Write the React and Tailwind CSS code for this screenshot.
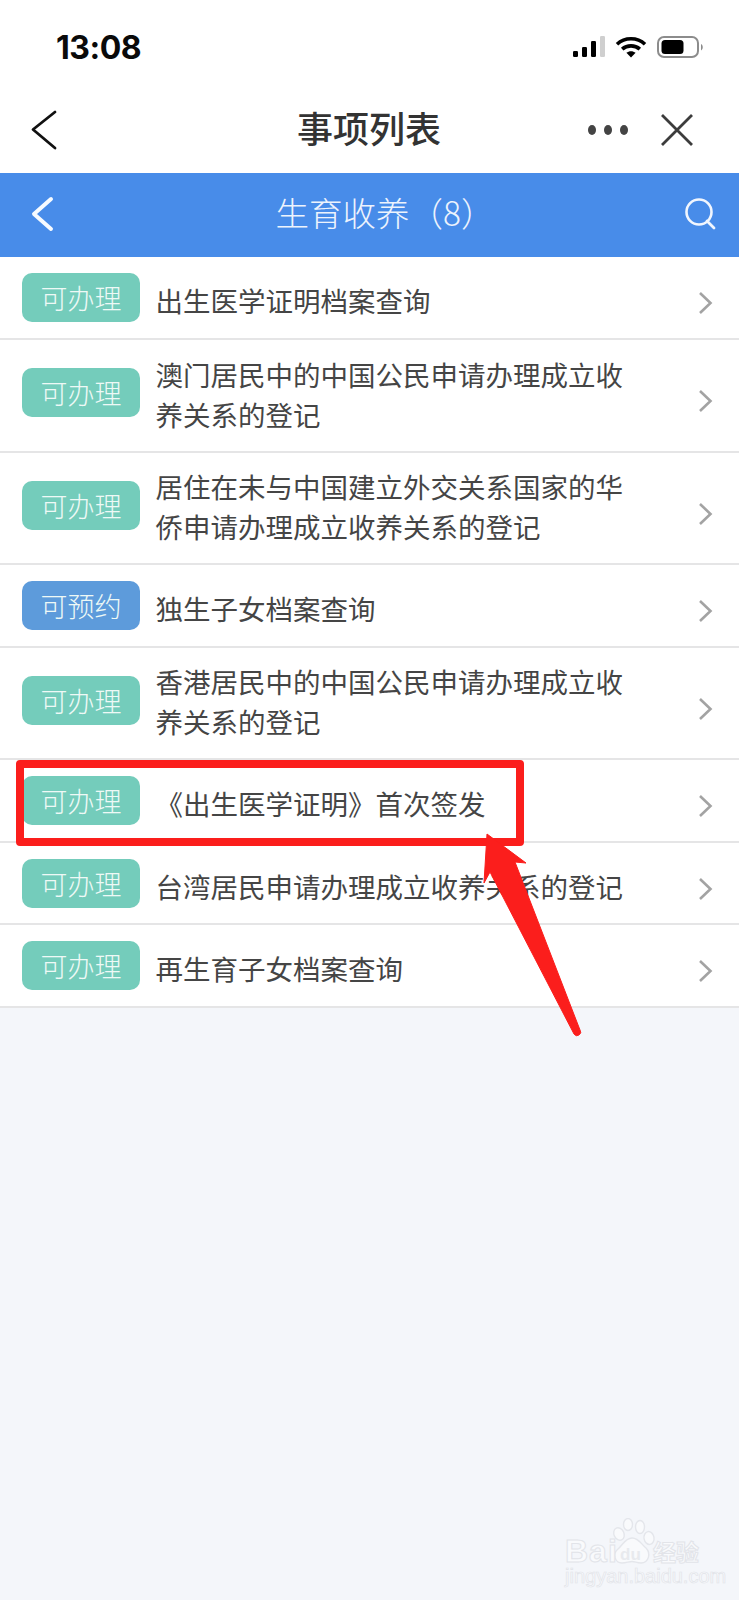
import React from "react";

const ROWS = [
  { status: "可办理", title: "出生医学证明档案查询", h: "h-[83px]" },
  { status: "可办理", title: "澳门居民中的中国公民申请办理成立收养关系的登记", h: "h-[113px]", multi: true },
  { status: "可办理", title: "居住在未与中国建立外交关系国家的华侨申请办理成立收养关系的登记", h: "h-[112px]", multi: true },
  { status: "可预约", title: "独生子女档案查询", h: "h-[83px]", blue: true },
  { status: "可办理", title: "香港居民中的中国公民申请办理成立收养关系的登记", h: "h-[112px]", multi: true },
  { status: "可办理", title: "《出生医学证明》首次签发", h: "h-[83px]" },
  { status: "可办理", title: "台湾居民申请办理成立收养关系的登记", h: "h-[82px]" },
  { status: "可办理", title: "再生育子女档案查询", h: "h-[83px]" },
];

function SignalIcon() {
  return (
    <svg width="32" height="22" viewBox="0 0 32 22">
      <rect x="0" y="15" width="5" height="6" rx="1.2" fill="#000" />
      <rect x="9" y="11" width="5" height="10" rx="1.2" fill="#000" />
      <rect x="18" y="5" width="5" height="16" rx="1.2" fill="#000" />
      <rect x="27" y="0" width="5" height="21" rx="1.2" fill="#cfcfcf" />
    </svg>
  );
}

function WifiIcon() {
  return (
    <svg width="32" height="22" viewBox="0 0 32 22" fill="none" stroke="#000" strokeWidth="3.6">
      <path d="M2 8.2C9.8 1 22.2 1 30 8.2" />
      <path d="M7.2 13.2C12 8.800 20 8.800 24.8 13.2" />
      <path d="M16 21.5l-4.600-4.700c2.600-2.200 6.600-2.200 9.200 0z" fill="#000" stroke="none" />
    </svg>
  );
}

function BatteryIcon() {
  return (
    <svg width="47" height="23" viewBox="0 0 47 23" fill="none">
      <rect x="1" y="1" width="40" height="20" rx="6" stroke="#8c8c8c" strokeWidth="2" />
      <rect x="4.5" y="4" width="22" height="14" rx="3.5" fill="#000" />
      <path d="M44 8c2 .6 2.600 5.400 0 6.400z" fill="#8c8c8c" />
    </svg>
  );
}

function Row({ status, title, h, multi, blue }) {
  return (
    <div className={`flex items-center ${h} border-b-2 border-[#e5e5e6] bg-white pl-[22px] pr-[26px]`}>
      <span
        className={`flex h-[49px] w-[118px] shrink-0 items-center justify-center rounded-[10px] text-[27px] leading-none font-light text-[#eef9f6] ${
          blue ? "bg-[#5d9bdb]" : "bg-[#74ccbb]"
        } ${multi ? "mb-[6px]" : ""}`}
      >
        {status}
      </span>
      <p
        className={`ml-[15.5px] w-[470px] shrink-0 text-[27.5px] leading-[40px] text-[#454545] ${
          multi ? "mb-[4px]" : "mt-[5px]"
        }`}
      >
        {title}
      </p>
      <svg className="mt-[11px] ml-auto shrink-0" width="15" height="24" viewBox="0 0 15 24" fill="none">
        <path d="M2 2l10.500 10L2 22" stroke="#a3a3a3" strokeWidth="2.6" />
      </svg>
    </div>
  );
}

export default function App() {
  return (
    <div className="relative min-h-[1600px] overflow-hidden bg-[#f4f6fa] font-['Noto_Sans_CJK_SC','Noto_Sans_CJK_JP',sans-serif]">
      {/* status bar */}
      <div className="flex h-[94px] items-center justify-between bg-white pl-[56px] pr-[35px]">
        <span className="mt-[2px] font-['Inter',sans-serif] text-[32px] leading-none font-bold tracking-[-0.5px] text-[#0a0a0a]">13:08</span>
        <div className="flex items-center gap-[10px]">
          <SignalIcon />
          <WifiIcon />
          <BatteryIcon />
        </div>
      </div>

      {/* navigation bar */}
      <div className="flex h-[79px] items-center bg-white pb-[7px] pl-[30px] pr-[46px]">
        <svg width="28" height="40" viewBox="0 0 28 40" fill="none">
          <path d="M25 2L3 19.500 25 38" stroke="#111" strokeWidth="2.8" strokeLinecap="round" strokeLinejoin="round" />
        </svg>
        <h1 className="mb-[6px] ml-[239px] text-[36px] leading-none font-medium text-[#333]">事项列表</h1>
        <div className="ml-auto flex items-center gap-[32px]">
          <svg width="42" height="12" viewBox="0 0 42 12" fill="#444">
            <ellipse cx="5" cy="6" rx="4" ry="5" />
            <ellipse cx="21" cy="6" rx="4" ry="5" />
            <ellipse cx="37" cy="6" rx="4" ry="5" />
          </svg>
          <svg width="32" height="32" viewBox="0 0 32 32" fill="none">
            <path d="M1 1l30 30M31 1L1 31" stroke="#3c3c3c" strokeWidth="2.8" />
          </svg>
        </div>
      </div>

      {/* category header */}
      <div className="flex h-[84px] items-center justify-between bg-[#488ce9] pb-[2px] pl-[31px] pr-[22px]">
        <svg width="24" height="36" viewBox="0 0 24 36" fill="none">
          <path d="M20 3L3 18l17 15" stroke="#f7fbff" strokeWidth="4" strokeLinecap="round" strokeLinejoin="round" />
        </svg>
        <h2 className="mb-[4px] pl-[30px] text-[33.5px] leading-none font-light text-[#edf3fd]">生育收养（8）</h2>
        <svg width="32" height="32" viewBox="0 0 32 32" fill="none">
          <circle cx="14" cy="14" r="12.5" stroke="#f1f6fe" strokeWidth="2.6" />
          <path d="M22 23l7 7" stroke="#f1f6fe" strokeWidth="2.8" strokeLinecap="round" />
        </svg>
      </div>

      {/* service list */}
      <div>
        {ROWS.map((row) => (
          <Row key={row.title} {...row} />
        ))}
      </div>

      {/* red callout marking the certificate item */}
      <div className="absolute top-[760px] left-[16px] h-[86px] w-[508px] rounded-[4px] border-[8px] border-[#fb1e1c]" />
      <svg className="absolute top-0 left-0" width="739" height="1100" viewBox="0 0 739 1100">
        <path
          d="M487 834L526 863 515 862 580 1030A3.500 3.500 0 0 1 574 1034L490 872 484 883z"
          fill="#fb1e1c"
          stroke="#fb1e1c"
          strokeWidth="1"
          strokeLinejoin="round"
        />
      </svg>

      {/* site watermark */}
      <div className="absolute top-[1518px] left-[565px] h-[66px] w-[140px] text-[#f9fafc]">
        <svg className="absolute top-0 left-[46px]" width="46" height="52" viewBox="0 0 46 52" fill="#f9fafc" stroke="#e4e6eb" strokeWidth="1.4">
          <ellipse cx="8" cy="16" rx="5" ry="6.500" transform="rotate(-25 8 16)" />
          <ellipse cx="17" cy="6.500" rx="4.500" ry="6" />
          <ellipse cx="29" cy="9" rx="4.500" ry="6.500" />
          <ellipse cx="38" cy="20" rx="5" ry="6.500" transform="rotate(-10 38 20)" />
          <path d="M21 20c7 0 9 6 14 10 5 5 3 15-5 15-4 0-6-1.500-9-1.500S15 45 11 45c-7 0-10-9-4-14 5-4 7-11 14-11z" />
        </svg>
        <span className="absolute top-[20px] left-0 font-['Liberation_Sans',sans-serif] text-[32px] leading-[27px] font-bold tracking-[1px] [-webkit-text-stroke:1px_#e2e4e9]">
          Bai
        </span>
        <span className="absolute top-[28px] left-[55px] font-['Liberation_Sans',sans-serif] text-[17px] leading-[17px] font-bold text-[#e8eaee]">
          du
        </span>
        <span className="absolute top-[20px] left-[88px] text-[23px] leading-[26px] font-bold whitespace-nowrap [-webkit-text-stroke:1px_#e2e4e9]">
          经验
        </span>
        <span className="absolute top-[48px] left-0 font-['Liberation_Sans',sans-serif] text-[20px] leading-[20px] whitespace-nowrap [-webkit-text-stroke:0.7px_#e2e4e9]">
          jingyan.baidu.com
        </span>
      </div>
    </div>
  );
}
